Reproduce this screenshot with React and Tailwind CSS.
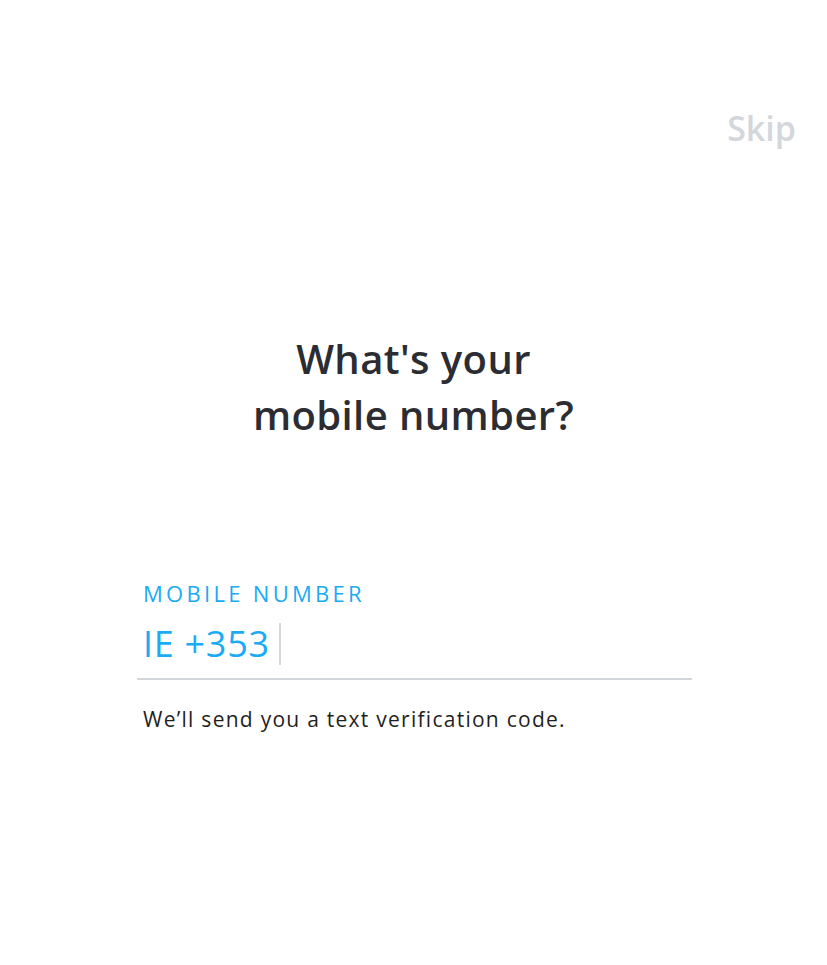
import React from 'react';

const font = { fontFamily: '"Open Sans", Lato, sans-serif' };

export default function App() {
  return (
    <div className="w-[827px] h-[965px] bg-white relative" style={font}>
      {/* Skip */}
      <div className="flex justify-end pt-[104px] pr-[31px]">
        <button className="text-[34px] leading-[48px] font-semibold text-[#d3d7dc]">Skip</button>
      </div>

      {/* Title */}
      <h1 className="mt-[179px] text-center text-[40px] leading-[56px] font-semibold tracking-[0.01em] text-[#2b2d33]">
        What's your
        <br />
        mobile number?
      </h1>

      {/* Field */}
      <div className="mt-[136px] ml-[137px] w-[555px]">
        <div className="pl-[6px] text-[22px] leading-[28px] tracking-[0.15em] text-[#1aabf5]">
          MOBILE NUMBER
        </div>
        <div className="mt-[16px] pl-[6px] flex items-center h-[42px]">
          <span className="text-[36px] leading-[42px] tracking-[0.02em] text-[#1aabf5]">IE +353</span>
          <span className="ml-[9px] w-[2px] h-[42px] bg-[#d5d9de]" />
        </div>
        <div className="mt-[13px] h-[2px] bg-[#d3d7db]" />
        <p className="mt-[24px] pl-[6px] text-[21px] leading-[30px] tracking-[0.06em] text-[#1f1f22]">
          We’ll send you a text verification code.
        </p>
      </div>
    </div>
  );
}
